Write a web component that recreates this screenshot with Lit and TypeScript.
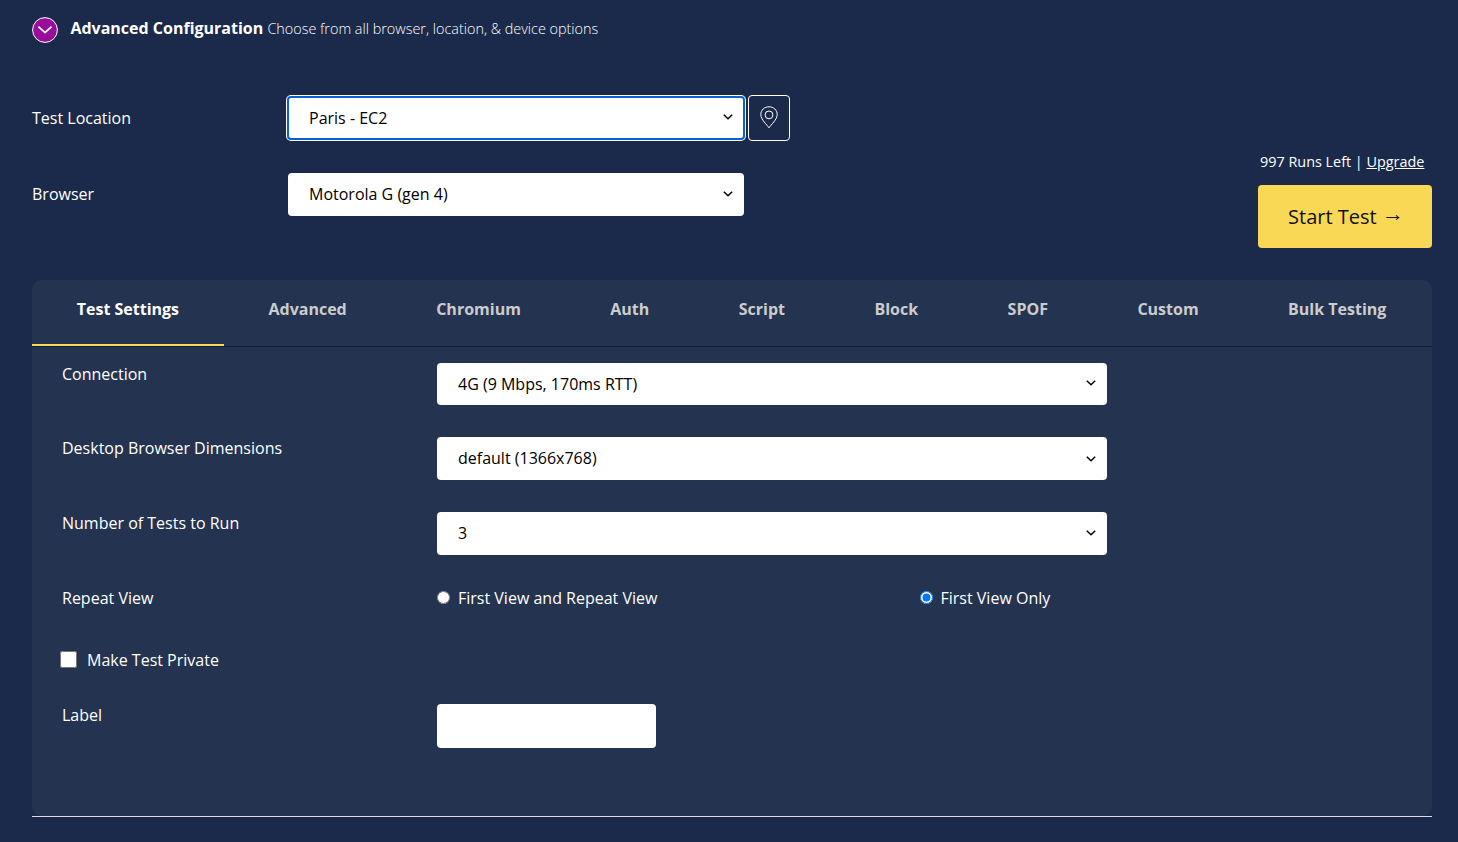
import { css, html, LitElement } from "lit";
import { customElement, property } from "lit/decorators.js";
import { classMap } from "lit/directives/class-map.js";

@customElement("app-select")
export class AppSelect extends LitElement {
  @property()
  value: string = "";

  @property({ type: Boolean, reflect: true })
  active = false;

  render() {
    return html`
      <select aria-label=${this.value}>
        <option>${this.value}</option>
      </select>
      <svg viewBox="0 0 10 6" width="10" height="6">
        <path d="M0.8 0.8 L5 4.8 L9.2 0.8" />
      </svg>
    `;
  }

  static styles = css`
    :host {
      display: grid;
      align-items: center;
      height: 43px;
      padding-bottom: 1px;
      background: #fff;
      border-radius: 4px;
      box-sizing: border-box;
    }
    :host([active]) {
      height: 44px;
      margin: 0 -1px;
      padding: 0;
      border: 2px solid #0761d1;
      box-shadow: 0 0 0 1px #fff;
    }
    select {
      grid-area: 1 / 1;
      appearance: none;
      width: 100%;
      height: 100%;
      margin: 0;
      padding: 0 40px 0 21px;
      border: 0;
      outline: 0;
      background: transparent;
      color: #000;
      font: 16px "Open Sans", sans-serif;
    }
    :host([active]) select {
      padding-left: 20px;
    }
    svg {
      grid-area: 1 / 1;
      justify-self: end;
      margin: var(--arrow-top, 0) 11px var(--arrow-bottom, 0) 0;
      pointer-events: none;
    }
    :host([active]) svg {
      margin: 0 10px 2px 0;
    }
    path {
      fill: none;
      stroke: #000;
      stroke-width: 1.5;
    }
  `;
}

@customElement("app-tabs")
export class AppTabs extends LitElement {
  @property({ type: Array })
  tabs: string[] = [];

  @property()
  selected: string = "";

  render() {
    return html`
      ${this.tabs.map(
        (tab) => html`
          <a class=${classMap({ tab: true, selected: tab === this.selected })}>${tab}</a>
        `
      )}
    `;
  }

  static styles = css`
    :host {
      display: flex;
      height: 67px;
      box-sizing: border-box;
      border-bottom: 1px solid #111d35;
    }
    .tab {
      box-sizing: border-box;
      padding: 18px 44.72px 0;
      color: #ccc;
      font-size: 16px;
      font-weight: 700;
      line-height: 22px;
      text-align: center;
      white-space: nowrap;
    }
    .selected {
      color: #fff;
      border-bottom: 2px solid #f9d856;
    }
  `;
}

@customElement("app-root")
export class App extends LitElement {
  tabs = [
    "Test Settings",
    "Advanced",
    "Chromium",
    "Auth",
    "Script",
    "Block",
    "SPOF",
    "Custom",
    "Bulk Testing",
  ];

  render() {
    return html`
      <header class="heading">
        <svg class="toggle" viewBox="0 0 26 26" width="26" height="26">
          <circle cx="13" cy="13" r="12.4" fill="#980d9a" stroke="#fff" />
          <path d="M6.4 9.6 L13 15.6 L19.6 9.6" fill="none" stroke="#fff" stroke-width="1.8" />
        </svg>
        <div class="title">
          <strong>Advanced Configuration</strong>
          <span class="hint">Choose from all browser, location, &amp; device options</span>
        </div>
      </header>

      <section class="top">
        <div class="fields">
          <label class="label">Test Location</label>
          <div class="location">
            <app-select class="select wide" active value="Paris - EC2"></app-select>
            <button class="pin" aria-label="Choose from map">
              <svg viewBox="0 0 18 23" width="18" height="23">
                <path d="M9 21.8 C7.2 18.9 0.8 13.6 0.8 8.6 C0.8 4 4.4 0.8 9 0.8 S17.2 4 17.2 8.6 C17.2 13.6 10.8 18.9 9 21.8 Z" />
                <circle cx="9" cy="8.9" r="3.9" />
              </svg>
            </button>
          </div>
          <label class="label browser">Browser</label>
          <app-select class="select" value="Motorola G (gen 4)"></app-select>
        </div>
        <div class="run">
          <div class="runs-left">997 Runs Left | <a class="upgrade">Upgrade</a></div>
          <button class="start">Start Test <span class="arrow">→</span></button>
        </div>
      </section>

      <main class="panel">
        <app-tabs .tabs=${this.tabs} selected="Test Settings"></app-tabs>
        <div class="settings">
          <div class="row connection">
            <label>Connection</label>
            <app-select class="short" value="4G (9 Mbps, 170ms RTT)"></app-select>
          </div>
          <div class="row">
            <label>Desktop Browser Dimensions</label>
            <app-select class="dimensions" value="default (1366x768)"></app-select>
          </div>
          <div class="row">
            <label>Number of Tests to Run</label>
            <app-select value="3"></app-select>
          </div>
          <div class="row repeat">
            <label>Repeat View</label>
            <div class="radios">
              <label class="choice"><input type="radio" name="fv" />First View and Repeat View</label>
              <label class="choice"><input type="radio" name="fv" checked />First View Only</label>
            </div>
          </div>
          <label class="private"><input type="checkbox" />Make Test Private</label>
          <div class="row">
            <label>Label</label>
            <input class="text" type="text" aria-label="Label" />
          </div>
        </div>
      </main>
      <div class="rule"></div>
    `;
  }

  static styles = css`
    :host {
      display: block;
      box-sizing: border-box;
      height: 842px;
      padding: 17px 26px 0 32px;
      overflow: hidden;
      background: #1b2a4a;
      color: #fff;
      font-family: "Open Sans", sans-serif;
      font-size: 16px;
      line-height: 22px;
    }
    .heading {
      display: flex;
      height: 78px;
    }
    .toggle {
      margin-right: 12.4px;
    }
    .hint {
      font-size: 14.4px;
      font-weight: 300;
    }
    .top {
      display: flex;
      justify-content: space-between;
      height: 185px;
    }
    .fields {
      display: grid;
      grid-template-columns: 256px auto;
      grid-template-rows: 46px 43px;
      row-gap: 32px;
      align-content: start;
      align-items: center;
    }
    .browser {
      padding-bottom: 1px;
    }
    .location {
      display: flex;
      align-items: center;
      gap: 4px;
    }
    .select {
      width: 456px;
    }
    .wide {
      width: 458px;
    }
    .pin {
      display: grid;
      place-items: center;
      box-sizing: border-box;
      width: 42px;
      height: 46px;
      padding: 0 0 2px;
      border: 1px solid #fff;
      border-radius: 4px;
      background: transparent;
    }
    .pin svg {
      fill: none;
      stroke: #fff;
      stroke-width: 1;
    }
    .run {
      width: 174px;
      padding-top: 56px;
    }
    .runs-left {
      padding-left: 2px;
      font-size: 14.4px;
      white-space: nowrap;
    }
    .upgrade {
      text-decoration: underline;
    }
    .start {
      width: 174px;
      height: 63px;
      margin-top: 12px;
      padding: 0;
      border: 0;
      border-radius: 4px;
      background: #f9d856;
      color: #111;
      font: 20px "Open Sans", sans-serif;
    }
    .arrow {
      margin-right: -2px;
      font-family: "Liberation Sans", sans-serif;
      font-size: 22px;
      line-height: 0;
      vertical-align: 3px;
    }
    .panel {
      height: 536px;
      border-radius: 10px;
      background: #243350;
    }
    .settings {
      padding: 16px 30px 0;
    }
    .row {
      display: grid;
      grid-template-columns: 375px 670px;
      align-items: start;
      height: 75px;
    }
    .connection {
      height: 74px;
    }
    .short {
      --arrow-bottom: 1px;
      height: 42px;
    }
    .dimensions {
      --arrow-top: 2px;
    }
    .repeat {
      height: 62px;
    }
    .radios {
      display: grid;
      grid-template-columns: 482.5px auto;
    }
    .choice,
    .private {
      display: flex;
      align-items: center;
    }
    .choice input {
      width: 13px;
      height: 13px;
      margin: 0 8px 1px 0;
    }
    .private {
      height: 22px;
      margin-bottom: 33px;
    }
    .private input {
      width: 17px;
      height: 17px;
      margin: 0 10px 2px -2px;
    }
    .text {
      box-sizing: border-box;
      width: 219px;
      height: 44px;
      border: 0;
      border-radius: 4px;
      background: #fff;
    }
    .rule {
      height: 1px;
      background: #dcdde0;
    }
  `;
}
